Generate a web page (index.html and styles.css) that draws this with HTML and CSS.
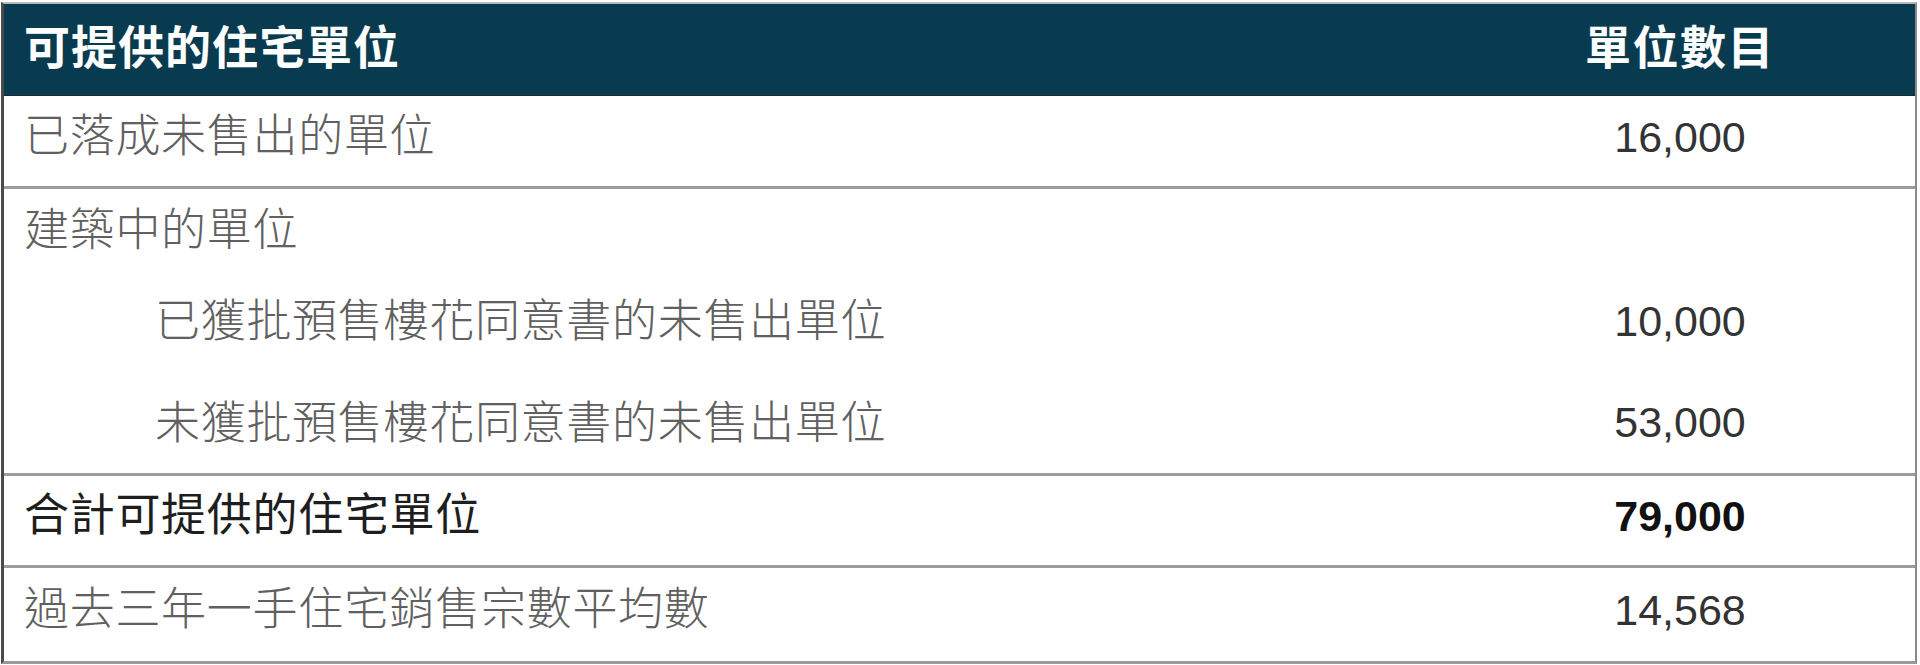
FILE: index.html
```html
<!DOCTYPE html>
<html lang="zh-Hant">
<head>
<meta charset="utf-8">
<title>可提供的住宅單位</title>
<link rel="stylesheet" href="styles.css">
</head>
<body>
<div class="table">
  <div class="row head">
    <div class="label">可提供的住宅單位</div>
    <div class="value">單位數目</div>
  </div>
  <div class="row r1 sep">
    <div class="label">已落成未售出的單位</div>
    <div class="value num">16,000</div>
  </div>
  <div class="group sep">
    <div class="row ga">
      <div class="label">建築中的單位</div>
      <div class="value num"></div>
    </div>
    <div class="row gb">
      <div class="label sub">已獲批預售樓花同意書的未售出單位</div>
      <div class="value num">10,000</div>
    </div>
    <div class="row gc">
      <div class="label sub">未獲批預售樓花同意書的未售出單位</div>
      <div class="value num">53,000</div>
    </div>
  </div>
  <div class="row r3 sep total">
    <div class="label">合計可提供的住宅單位</div>
    <div class="value num">79,000</div>
  </div>
  <div class="row r4">
    <div class="label">過去三年一手住宅銷售宗數平均數</div>
    <div class="value num">14,568</div>
  </div>
</div>
</body>
</html>
```

FILE: styles.css
```css
* { box-sizing: border-box; }
html, body { margin: 0; padding: 0; background: #ffffff; }
body { padding: 2px 0 0 1px; }

.table {
  width: 1916px;
  border-top: 2px solid #b8b8b8;
  border-left: 3px solid #4a4a4a;
  border-right: 2px solid #8a8a8a;
  border-bottom: 3px solid #9a9a9a;
  font-family: "Noto Sans CJK TC", "Noto Sans CJK SC", sans-serif;
  font-size: 45px;
  color: #606060;
}

.row {
  display: flex;
  align-items: center;
}

.label {
  flex: 1;
  padding-left: 20px;
  line-height: 54px;
  padding-bottom: 17px;
  font-weight: 300;
  letter-spacing: 0.7px;
  white-space: nowrap;
}
.label.sub { padding-left: 151px; }

.value {
  width: 470px;
  text-align: center;
  line-height: 54px;
  white-space: nowrap;
}
.num {
  font-family: "Liberation Sans", Arial, sans-serif;
  font-size: 43px;
  color: #333333;
  padding-bottom: 9px;
}

.head {
  height: 92px;
  background: #093b50;
  border-bottom: 1px solid #1c2a30;
  color: #ffffff;
}
.head .label,
.head .value {
  font-weight: 700;
  font-size: 46px;
  letter-spacing: 1px;
  padding-bottom: 12px;
  color: #ffffff;
}
.head .value { letter-spacing: 1.5px; }

.sep { border-bottom: 3px solid #9c9c9c; }

.r1 { height: 93px; }
.group { display: flex; flex-direction: column; }
.ga { height: 88px; }
.gb { height: 95px; }
.gc { height: 101px; }
.ga .label { padding-bottom: 12px; }
.gb .label { padding-bottom: 14px; }
.gc .label { padding-bottom: 6px; }
.gb .num { padding-bottom: 8px; }
.gc .num { padding-bottom: 2px; }

.r3 { height: 92px; }
.total .label { color: #1e1e1e; font-weight: 400; }
.total .num { color: #111111; font-weight: 700; }

.r4 { height: 93px; }
```
